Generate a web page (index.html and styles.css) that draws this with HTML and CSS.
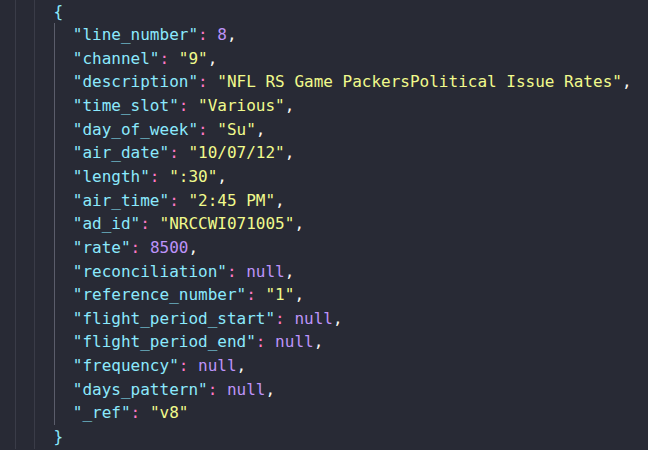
FILE: index.html
```html
<!DOCTYPE html>
<html>
<head>
<meta charset="utf-8">
<link rel="stylesheet" href="styles.css">
</head>
<body>
<div class="editor">
  <div class="line"><span class="g"></span><span class="g"></span><span class="code"><span class="b">{</span></span></div>
  <div class="line"><span class="g"></span><span class="g"></span><span class="g a"></span><span class="code"><span class="k">"line_number"</span><span class="c">:</span> <span class="n">8</span><span class="p">,</span></span></div>
  <div class="line"><span class="g"></span><span class="g"></span><span class="g a"></span><span class="code"><span class="k">"channel"</span><span class="c">:</span> <span class="s">"9"</span><span class="p">,</span></span></div>
  <div class="line"><span class="g"></span><span class="g"></span><span class="g a"></span><span class="code"><span class="k">"description"</span><span class="c">:</span> <span class="s">"NFL RS Game PackersPolitical Issue Rates"</span><span class="p">,</span></span></div>
  <div class="line"><span class="g"></span><span class="g"></span><span class="g a"></span><span class="code"><span class="k">"time_slot"</span><span class="c">:</span> <span class="s">"Various"</span><span class="p">,</span></span></div>
  <div class="line"><span class="g"></span><span class="g"></span><span class="g a"></span><span class="code"><span class="k">"day_of_week"</span><span class="c">:</span> <span class="s">"Su"</span><span class="p">,</span></span></div>
  <div class="line"><span class="g"></span><span class="g"></span><span class="g a"></span><span class="code"><span class="k">"air_date"</span><span class="c">:</span> <span class="s">"10/07/12"</span><span class="p">,</span></span></div>
  <div class="line"><span class="g"></span><span class="g"></span><span class="g a"></span><span class="code"><span class="k">"length"</span><span class="c">:</span> <span class="s">":30"</span><span class="p">,</span></span></div>
  <div class="line"><span class="g"></span><span class="g"></span><span class="g a"></span><span class="code"><span class="k">"air_time"</span><span class="c">:</span> <span class="s">"2:45 PM"</span><span class="p">,</span></span></div>
  <div class="line"><span class="g"></span><span class="g"></span><span class="g a"></span><span class="code"><span class="k">"ad_id"</span><span class="c">:</span> <span class="s">"NRCCWI071005"</span><span class="p">,</span></span></div>
  <div class="line"><span class="g"></span><span class="g"></span><span class="g a"></span><span class="code"><span class="k">"rate"</span><span class="c">:</span> <span class="n">8500</span><span class="p">,</span></span></div>
  <div class="line"><span class="g"></span><span class="g"></span><span class="g a"></span><span class="code"><span class="k">"reconciliation"</span><span class="c">:</span> <span class="n">null</span><span class="p">,</span></span></div>
  <div class="line"><span class="g"></span><span class="g"></span><span class="g a"></span><span class="code"><span class="k">"reference_number"</span><span class="c">:</span> <span class="s">"1"</span><span class="p">,</span></span></div>
  <div class="line"><span class="g"></span><span class="g"></span><span class="g a"></span><span class="code"><span class="k">"flight_period_start"</span><span class="c">:</span> <span class="n">null</span><span class="p">,</span></span></div>
  <div class="line"><span class="g"></span><span class="g"></span><span class="g a"></span><span class="code"><span class="k">"flight_period_end"</span><span class="c">:</span> <span class="n">null</span><span class="p">,</span></span></div>
  <div class="line"><span class="g"></span><span class="g"></span><span class="g a"></span><span class="code"><span class="k">"frequency"</span><span class="c">:</span> <span class="n">null</span><span class="p">,</span></span></div>
  <div class="line"><span class="g"></span><span class="g"></span><span class="g a"></span><span class="code"><span class="k">"days_pattern"</span><span class="c">:</span> <span class="n">null</span><span class="p">,</span></span></div>
  <div class="line"><span class="g"></span><span class="g"></span><span class="g a"></span><span class="code"><span class="k">"_ref"</span><span class="c">:</span> <span class="s">"v8"</span></span></div>
  <div class="line"><span class="g"></span><span class="g"></span><span class="code"><span class="b">}</span></span></div>
</div>
</body>
</html>
```

FILE: styles.css
```css
html, body {
  margin: 0;
  padding: 0;
  background: #282a35;
  height: 100%;
  overflow: hidden;
}

.editor {
  padding-left: 15px;
  margin-top: -0.5px;
  font-family: "DejaVu Sans Mono", monospace;
  font-size: 16px;
  color: #f8f8f2;
}

.line {
  display: flex;
  height: 23.65px;
  line-height: 23.65px;
}

.g {
  flex: none;
  width: 2ch;
  box-sizing: border-box;
  border-left: 1px solid #3a3c48;
}

.g.a {
  border-left-color: #5b5d6b;
}

.code {
  white-space: pre;
}

.b { color: #8be9fd; }
.k { color: #8be9fd; }
.s { color: #f1fa8c; }
.n { color: #bd93f9; }
.c { color: #ff79c6; }
.p { color: #f8f8f2; }
```
